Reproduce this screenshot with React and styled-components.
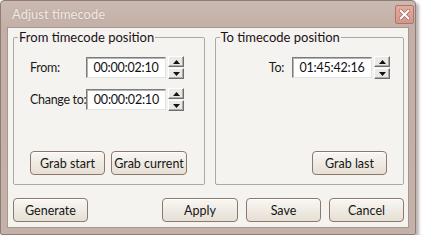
import React from "react";
import styled, { createGlobalStyle } from "styled-components";

const GlobalStyle = createGlobalStyle`
  body {
    margin: 0;
    background: #ffffff;
    font-family: Lato, "Noto Sans", sans-serif;
  }
`;

const Window = styled.div`
  width: 416px;
  height: 235px;
  box-sizing: border-box;
  display: flex;
  flex-direction: column;
  border: 1px solid #8e7d76;
  border-radius: 4px 4px 2px 2px;
  background: linear-gradient(#cbbab2, #c2afa6 30px, #c4b2a9);
  box-shadow: 3px 3px 3px rgba(60, 40, 30, 0.35);
`;

const TitleBar = styled.div`
  height: 26px;
  flex: none;
  display: flex;
  align-items: center;
  justify-content: space-between;
  padding: 0 1px 0 11px;
`;

const Title = styled.span`
  font-size: 13px;
  color: #efe9e5;
  text-shadow: 0 0 2px rgba(150, 120, 110, 0.4);
`;

const CloseButton = styled.div`
  width: 19px;
  height: 19px;
  box-sizing: border-box;
  display: flex;
  align-items: center;
  justify-content: center;
  border: 1px solid #a8786e;
  border-radius: 2px;
  background: linear-gradient(#e6aa9c, #d9948a);
`;

const Client = styled.div`
  flex: 1;
  margin: 0 6px 6px 6px;
  display: flex;
  flex-direction: column;
  padding: 2px 4px 5px 5px;
  border: 1px solid #a89790;
  background: #f5f3ef;
`;

const Groups = styled.div`
  display: flex;
  gap: 10px;
`;

const Group = styled.fieldset`
  width: ${(p) => p.$width}px;
  height: 155px;
  box-sizing: border-box;
  margin: 0;
  display: flex;
  flex-direction: column;
  padding: 12px 16px 9px 16px;
  border: 1px solid #a9a9a9;
  border-radius: 2px;
`;

const Legend = styled.legend`
  margin-left: -12px;
  padding: 0 1px;
  font-size: 13px;
  line-height: 14px;
  color: #221018;
`;

const Fields = styled.div`
  display: flex;
  flex-direction: column;
  gap: 9px;
`;

const FieldRow = styled.div`
  display: flex;
  align-items: center;
  justify-content: ${(p) => (p.$end ? "flex-end" : "flex-start")};
  margin-right: ${(p) => (p.$end ? "-3px" : "0")};
`;

const Label = styled.span`
  min-width: ${(p) => p.$width || 0}px;
  margin-right: ${(p) => p.$gap || 0}px;
  font-size: 12.5px;
  letter-spacing: -0.3px;
  color: #1a1a1a;
  white-space: nowrap;
`;

const TimeInput = styled.input`
  width: 80px;
  height: 21px;
  box-sizing: border-box;
  padding: 0;
  border: 1px solid;
  border-color: #7c7c7c #e2e2e2 #e2e2e2 #7c7c7c;
  box-shadow: inset 1px 1px 0 #b4b4b4;
  background: #ffffff;
  text-align: center;
  font-family: Lato, "Noto Sans", sans-serif;
  font-size: 12.5px;
  letter-spacing: -0.2px;
  color: #111;
  outline: none;
`;

const Spin = styled.div`
  margin-left: 2px;
  display: flex;
  flex-direction: column;
  gap: 1px;
`;

const SpinButton = styled.div`
  width: 16px;
  height: 11px;
  box-sizing: border-box;
  display: flex;
  align-items: center;
  justify-content: center;
  border: 1px solid;
  border-color: #ffffff #6f6f6f #6f6f6f #ffffff;
  box-shadow: inset -1px -1px 0 #a9a9a9;
  background: #ebe9e6;
`;

const GroupButtons = styled.div`
  margin-top: auto;
  display: flex;
  justify-content: ${(p) => (p.$end ? "flex-end" : "flex-start")};
  gap: 6px;
`;

const Button = styled.div`
  width: ${(p) => p.$width || 75}px;
  height: 24px;
  box-sizing: border-box;
  display: flex;
  align-items: center;
  justify-content: center;
  border: 1px solid #8e776b;
  border-radius: 4px;
  background: linear-gradient(#f9f7f4, #efebe4 50%, #e6dfd4);
  box-shadow: inset 0 1px 0 #ffffff;
  font-size: 12.5px;
  color: #161616;
`;

const Footer = styled.div`
  margin-top: auto;
  display: flex;
  align-items: center;
  gap: 8px;
`;

const Spacer = styled.div`
  flex: 1;
`;

const Arrow = ({ up }) => (
  <svg width="7" height="4" viewBox="0 0 7 4">
    <path d={up ? "M3.5 0 L7 4 L0 4 Z" : "M0 0 L7 0 L3.5 4 Z"} fill="#111" />
  </svg>
);

const Spinner = () => (
  <Spin>
    <SpinButton>
      <Arrow up />
    </SpinButton>
    <SpinButton>
      <Arrow />
    </SpinButton>
  </Spin>
);

export default function App() {
  return (
    <>
      <GlobalStyle />
      <Window>
        <TitleBar>
          <Title>Adjust timecode</Title>
          <CloseButton>
            <svg width="11" height="11" viewBox="0 0 11 11">
              <path
                d="M1.5 1.5 L9.5 9.5 M9.5 1.5 L1.5 9.5"
                stroke="#9a6a62"
                strokeWidth="3.4"
                strokeLinecap="round"
              />
              <path
                d="M1.5 1.5 L9.5 9.5 M9.5 1.5 L1.5 9.5"
                stroke="#ffffff"
                strokeWidth="2"
                strokeLinecap="round"
              />
            </svg>
          </CloseButton>
        </TitleBar>
        <Client>
          <Groups>
            <Group $width={192}>
              <Legend>From timecode position</Legend>
              <Fields>
                <FieldRow>
                  <Label $width={56}>From:</Label>
                  <TimeInput readOnly value="00:00:02:10" />
                  <Spinner />
                </FieldRow>
                <FieldRow>
                  <Label $width={56}>Change to:</Label>
                  <TimeInput readOnly value="00:00:02:10" />
                  <Spinner />
                </FieldRow>
              </Fields>
              <GroupButtons>
                <Button>Grab start</Button>
                <Button $width={76}>Grab current</Button>
              </GroupButtons>
            </Group>
            <Group $width={190}>
              <Legend>To timecode position</Legend>
              <Fields>
                <FieldRow $end>
                  <Label $gap={8}>To:</Label>
                  <TimeInput readOnly value="01:45:42:16" />
                  <Spinner />
                </FieldRow>
              </Fields>
              <GroupButtons $end>
                <Button>Grab last</Button>
              </GroupButtons>
            </Group>
          </Groups>
          <Footer>
            <Button>Generate</Button>
            <Spacer />
            <Button $width={76}>Apply</Button>
            <Button>Save</Button>
            <Button>Cancel</Button>
          </Footer>
        </Client>
      </Window>
    </>
  );
}
